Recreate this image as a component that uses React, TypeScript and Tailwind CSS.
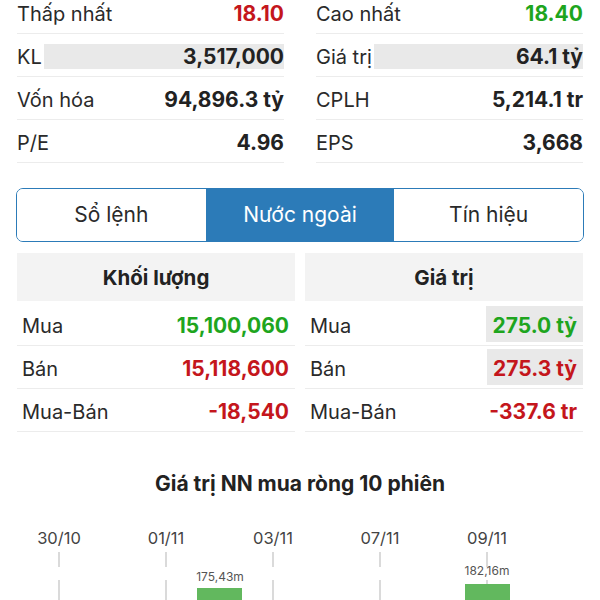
import React from "react";

const GREEN = "text-[#1ea51e]";
const RED = "text-[#c4161c]";

type Stat = { label: string; value: string; color?: string; shade?: boolean };

const leftStats: Stat[] = [
  { label: "Thấp nhất", value: "18.10", color: RED },
  { label: "KL", value: "3,517,000", shade: true },
  { label: "Vốn hóa", value: "94,896.3 tỷ" },
  { label: "P/E", value: "4.96" },
];

const rightStats: Stat[] = [
  { label: "Cao nhất", value: "18.40", color: GREEN },
  { label: "Giá trị", value: "64.1 tỷ", shade: true },
  { label: "CPLH", value: "5,214.1 tr" },
  { label: "EPS", value: "3,668" },
];

function StatRow({ s }: { s: Stat }) {
  return (
    <div className="flex h-[43px] items-center border-b border-[#ececec] pt-[3px]">
      <span className="text-[20px] text-[#2a2a2a]">{s.label}</span>
      <div
        className={`ml-[2px] flex h-[25px] flex-1 items-center justify-end ${
          s.shade ? "bg-[#e9e9e9]" : ""
        }`}
      >
        <span className={`text-[21px] font-bold ${s.color ?? "text-[#222]"}`}>{s.value}</span>
      </div>
    </div>
  );
}

type FRow = { label: string; value: string; color: string; shade?: boolean };

function ForeignTable({ title, rows }: { title: string; rows: FRow[] }) {
  return (
    <div className="flex-1">
      <div className="flex h-[48px] items-center justify-center bg-[#f3f3f3] pt-[2px]">
        <span className="text-[20.5px] font-bold text-[#222]">{title}</span>
      </div>
      <div className="mt-[2px]">
        {rows.map((r) => (
          <div key={r.label} className="flex h-[43px] items-center justify-between border-b border-[#ececec] pl-[5px]">
            <span className="pt-[3px] text-[20px] text-[#2a2a2a]">{r.label}</span>
            <span
              className={`flex h-[36px] items-center pt-[3px] text-[21px] font-bold ${r.color} ${
                r.shade ? "bg-[#e9e9e9] px-[6px]" : "pr-[6px]"
              }`}
            >
              {r.value}
            </span>
          </div>
        ))}
      </div>
    </div>
  );
}

const dates = [
  { x: 59, label: "30/10" },
  { x: 166, label: "01/11" },
  { x: 273, label: "03/11" },
  { x: 380, label: "07/11" },
  { x: 487, label: "09/11" },
];

function Chart() {
  return (
    <svg width="600" height="100" viewBox="0 0 600 100" className="block">
      {dates.map((d) => (
        <g key={d.label}>
          <text
            x={d.x}
            y={44}
            textAnchor="middle"
            fontSize="16.5"
            fill="#444"
            fontFamily="Inter, sans-serif"
          >
            {d.label}
          </text>
          <line x1={d.x} y1={52} x2={d.x} y2={67} stroke="#b5b5b5" strokeWidth="1" />
          <line x1={d.x} y1={80} x2={d.x} y2={100} stroke="#b5b5b5" strokeWidth="1" />
        </g>
      ))}
      <text x={220} y={81} textAnchor="middle" fontSize="12" fill="#555" fontFamily="Inter, sans-serif">
        175,43m
      </text>
      <rect x={197} y={88} width={45} height={12} fill="#62b85e" />
      <text x={487} y={75} textAnchor="middle" fontSize="12" fill="#555" fontFamily="Inter, sans-serif">
        182,16m
      </text>
      <rect x={465} y={84} width={45} height={16} fill="#62b85e" />
    </svg>
  );
}

export default function App() {
  return (
    <div className="h-[600px] w-[600px] overflow-hidden bg-white font-['Inter',sans-serif]">
      {/* Price stats */}
      <div className="-mt-[9px] grid grid-cols-2 gap-8 px-[17px]">
        <div>
          {leftStats.map((s) => (
            <StatRow key={s.label} s={s} />
          ))}
        </div>
        <div>
          {rightStats.map((s) => (
            <StatRow key={s.label} s={s} />
          ))}
        </div>
      </div>

      {/* Tabs */}
      <div className="mx-[16px] mt-[25px] flex h-[54px] overflow-hidden rounded-[7px] border-[1.5px] border-[#2c7bb8]">
        <div className="flex flex-1 items-center justify-center bg-white text-[21px] text-[#2a2a2a]">Sổ lệnh</div>
        <div className="flex flex-1 items-center justify-center bg-[#2c7bb8] text-[21px] text-white">Nước ngoài</div>
        <div className="flex flex-1 items-center justify-center bg-white text-[21px] text-[#2a2a2a]">Tín hiệu</div>
      </div>

      {/* Foreign trading */}
      <div className="mt-[11px] flex gap-[10px] px-[17px]">
        <ForeignTable
          title="Khối lượng"
          rows={[
            { label: "Mua", value: "15,100,060", color: GREEN },
            { label: "Bán", value: "15,118,600", color: RED },
            { label: "Mua-Bán", value: "-18,540", color: RED },
          ]}
        />
        <ForeignTable
          title="Giá trị"
          rows={[
            { label: "Mua", value: "275.0 tỷ", color: GREEN, shade: true },
            { label: "Bán", value: "275.3 tỷ", color: RED, shade: true },
            { label: "Mua-Bán", value: "-337.6 tr", color: RED },
          ]}
        />
      </div>

      {/* Chart */}
      <div className="mt-[36px] text-center text-[21px] font-bold text-[#222]">Giá trị NN mua ròng 10 phiên</div>
      <div className="mt-[0px]">
        <Chart />
      </div>
    </div>
  );
}
